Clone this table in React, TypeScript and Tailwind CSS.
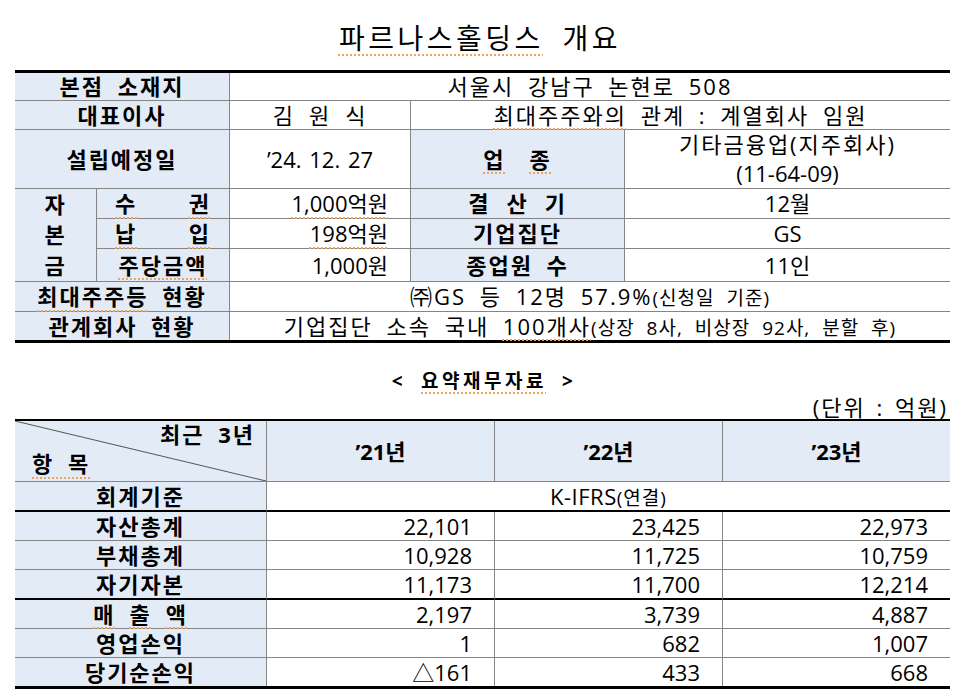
import React from 'react';

const FONT = "font-['Open_Sans','Noto_Sans_CJK_KR',sans-serif]";
const LBL = 'bg-[#e3ebf6] font-bold';
const DOT = 'underline decoration-dotted decoration-[#f0a35a] decoration-[1.5px] underline-offset-[5px]';

type CellProps = {
  className?: string;
  children?: React.ReactNode;
};

// grey ruled cell; borders are set by the caller
const Cell = ({ className = '', children }: CellProps) => (
  <div className={`flex items-center border-[#858585] ${className}`}>{children}</div>
);

const Spread = ({ chars, gap }: { chars: string[]; gap: string }) => (
  <span className={`flex ${gap}`}>
    {chars.map((c, i) => (
      <span key={i}>{c}</span>
    ))}
  </span>
);

const Overview = () => (
  <div className="ml-[15px] grid w-[935px] grid-cols-[82px_133px_181px_214px_325px] grid-rows-[28px_29px_59px_30px_30px_33px_30px_28px] border-t-[3px] border-b-[3px] border-black">
    {/* row 1 */}
    <Cell className={`col-span-2 justify-center border-b border-r ${LBL}`}>본점 소재지</Cell>
    <Cell className="col-span-3 justify-center border-b">서울시 강남구 논현로 508</Cell>

    {/* row 2 */}
    <Cell className={`col-span-2 justify-center border-b border-r ${LBL}`}>대표이사</Cell>
    <Cell className="justify-center border-b border-r">
      <Spread chars={['김', '원', '식']} gap="gap-[14px]" />
    </Cell>
    <Cell className="col-span-2 justify-center border-b">
      <span>
        <span className={DOT}>최대주주와의</span> 관계 : 계열회사 임원
      </span>
    </Cell>

    {/* row 3 */}
    <Cell className={`col-span-2 justify-center border-b border-r ${LBL}`}>설립예정일</Cell>
    <Cell className="justify-center border-b border-r tracking-normal [word-spacing:2px]">’24. 12. 27</Cell>
    <Cell className={`justify-center border-b border-r ${LBL}`}>
      <span className="flex gap-[24px]">
        <span className={DOT}>업</span>
        <span className={DOT}>종</span>
      </span>
    </Cell>
    <Cell className="flex-col justify-center border-b leading-[29px]">
      <span>기타금융업(지주회사)</span>
      <span className="tracking-normal">(11-64-09)</span>
    </Cell>

    {/* rows 4-6 */}
    <Cell className={`row-span-3 flex-col border-b border-r ${LBL}`}>
      <span className="flex h-[30px] items-center">자</span>
      <span className="flex h-[30px] items-center">본</span>
      <span className="flex h-[32px] items-center">금</span>
    </Cell>
    <Cell className={`justify-between border-b border-r px-[18px] ${LBL}`}>
      <span className={DOT}>수</span>
      <span className={DOT}>권</span>
    </Cell>
    <Cell className="justify-end border-b border-r pr-[22px] tracking-normal">
      <span className={DOT}>1,000억원</span>
    </Cell>
    <Cell className={`justify-center border-b border-r ${LBL}`}>
      <Spread chars={['결', '산', '기']} gap="gap-[16px]" />
    </Cell>
    <Cell className="justify-center border-b tracking-normal">12월</Cell>

    <Cell className={`justify-between border-b border-r px-[18px] ${LBL}`}>
      <span className={DOT}>납</span>
      <span className={DOT}>입</span>
    </Cell>
    <Cell className="justify-end border-b border-r pr-[22px] tracking-normal">
      <span className={DOT}>198억원</span>
    </Cell>
    <Cell className={`justify-center border-b border-r ${LBL}`}>기업집단</Cell>
    <Cell className="justify-center border-b tracking-normal">GS</Cell>

    <Cell className={`justify-center border-b border-r ${LBL}`}>
      <span className={DOT}>주당금액</span>
    </Cell>
    <Cell className="justify-end border-b border-r pr-[22px] tracking-normal">1,000원</Cell>
    <Cell className={`justify-center border-b border-r ${LBL}`}>종업원 수</Cell>
    <Cell className="justify-center border-b tracking-normal">11인</Cell>

    {/* row 7 */}
    <Cell className={`col-span-2 justify-center border-b border-r ${LBL}`}>
      <span>
        <span className={DOT}>최대주주등</span> 현황
      </span>
    </Cell>
    <Cell className="col-span-3 justify-center border-b">
      <span>
        ㈜GS 등 12명 57.9%<span className="text-[19px] tracking-[1px]">(신청일 기준)</span>
      </span>
    </Cell>

    {/* row 8 */}
    <Cell className={`col-span-2 justify-center border-r ${LBL}`}>관계회사 현황</Cell>
    <Cell className="col-span-3 justify-center">
      <span>
        기업집단 소속 국내 <span className={DOT}>100개사</span>
        <span className="text-[19px] tracking-[1px]">(상장 8사, 비상장 92사, 분할 후)</span>
      </span>
    </Cell>
  </div>
);

const rows = [
  { label: '자산총계', v: ['22,101', '23,425', '22,973'], line: 'border-b' },
  { label: '부채총계', v: ['10,928', '11,725', '10,759'], line: 'border-b' },
  { label: '자기자본', v: ['11,173', '11,700', '12,214'], line: 'border-b-2 border-b-black' },
  { label: '매 출 액', v: ['2,197', '3,739', '4,887'], line: 'border-b' },
  { label: '영업손익', v: ['1', '682', '1,007'], line: 'border-b' },
  { label: '당기순손익', v: ['△161', '433', '668'], line: '' },
];

const Financials = () => (
  <div className="ml-[15px] grid w-[935px] grid-cols-[252px_228px_228px_227px] grid-rows-[61px_30px_29px_29px_30px_29px_29px_28px] border-t-2 border-b-[3px] border-black">
    <Cell className="relative border-b border-r bg-[#e3ebf6] font-bold">
      <svg className="absolute inset-0 h-full w-full" preserveAspectRatio="none" viewBox="0 0 251 60">
        <line x1="0" y1="0" x2="251" y2="60" stroke="#555" strokeWidth="1" />
      </svg>
      <span className="absolute right-[11px] top-[0px] leading-[26px]">최근 3년</span>
      <span className={`absolute left-[17px] bottom-[5px] leading-[26px] ${DOT}`}>항 목</span>
    </Cell>
    <Cell className={`justify-center border-b border-r ${LBL} tracking-normal`}>’21년</Cell>
    <Cell className={`justify-center border-b border-r ${LBL} tracking-normal`}>’22년</Cell>
    <Cell className={`justify-center border-b ${LBL} tracking-normal`}>’23년</Cell>

    <Cell className={`justify-center border-b-2 border-r border-b-black ${LBL}`}>회계기준</Cell>
    <Cell className="col-span-3 justify-center border-b-2 border-b-black tracking-[0.5px]">
      <span>
        K-IFRS<span className="text-[19px] tracking-[1px]">(연결)</span>
      </span>
    </Cell>

    {rows.map((r) => (
      <React.Fragment key={r.label}>
        <Cell className={`justify-center border-r ${r.line} ${LBL}`}>
          {r.label === '매 출 액' ? (
            <span className={DOT}>
              <Spread chars={['매', '출', '액']} gap="gap-[14px]" />
            </span>
          ) : (
            r.label
          )}
        </Cell>
        {r.v.map((v, i) => (
          <Cell
            key={i}
            className={`justify-end pr-[22px] tracking-normal ${r.line} ${i < 2 ? 'border-r' : ''}`}
          >
            {v}
          </Cell>
        ))}
      </React.Fragment>
    ))}
  </div>
);

export default function App() {
  return (
    <div className={`h-[697px] w-[960px] overflow-hidden bg-white text-[22px] tracking-[2px] text-black [word-spacing:6px] ${FONT}`}>
      <div className="flex h-[70px] items-center justify-center pt-[6px]">
        <h1 className="text-[28px] font-normal tracking-[3.5px] [word-spacing:8px]">
          <span className={DOT}>파르나스홀딩스</span> 개요
        </h1>
      </div>

      <Overview />

      <div className="h-[76px] pt-[24px]">
        <div className="flex h-[28px] items-center justify-center gap-[15px] pl-[8px] text-[19px] font-bold tracking-[3.5px]">
          <span>&lt;</span>
          <span className={DOT}>요약재무자료</span>
          <span>&gt;</span>
        </div>
        <div className="h-[24px] pr-[12px] text-right leading-[24px] [word-spacing:3px]">
          (단위 : <span className={DOT}>억원</span>)
        </div>
      </div>

      <Financials />
    </div>
  );
}
